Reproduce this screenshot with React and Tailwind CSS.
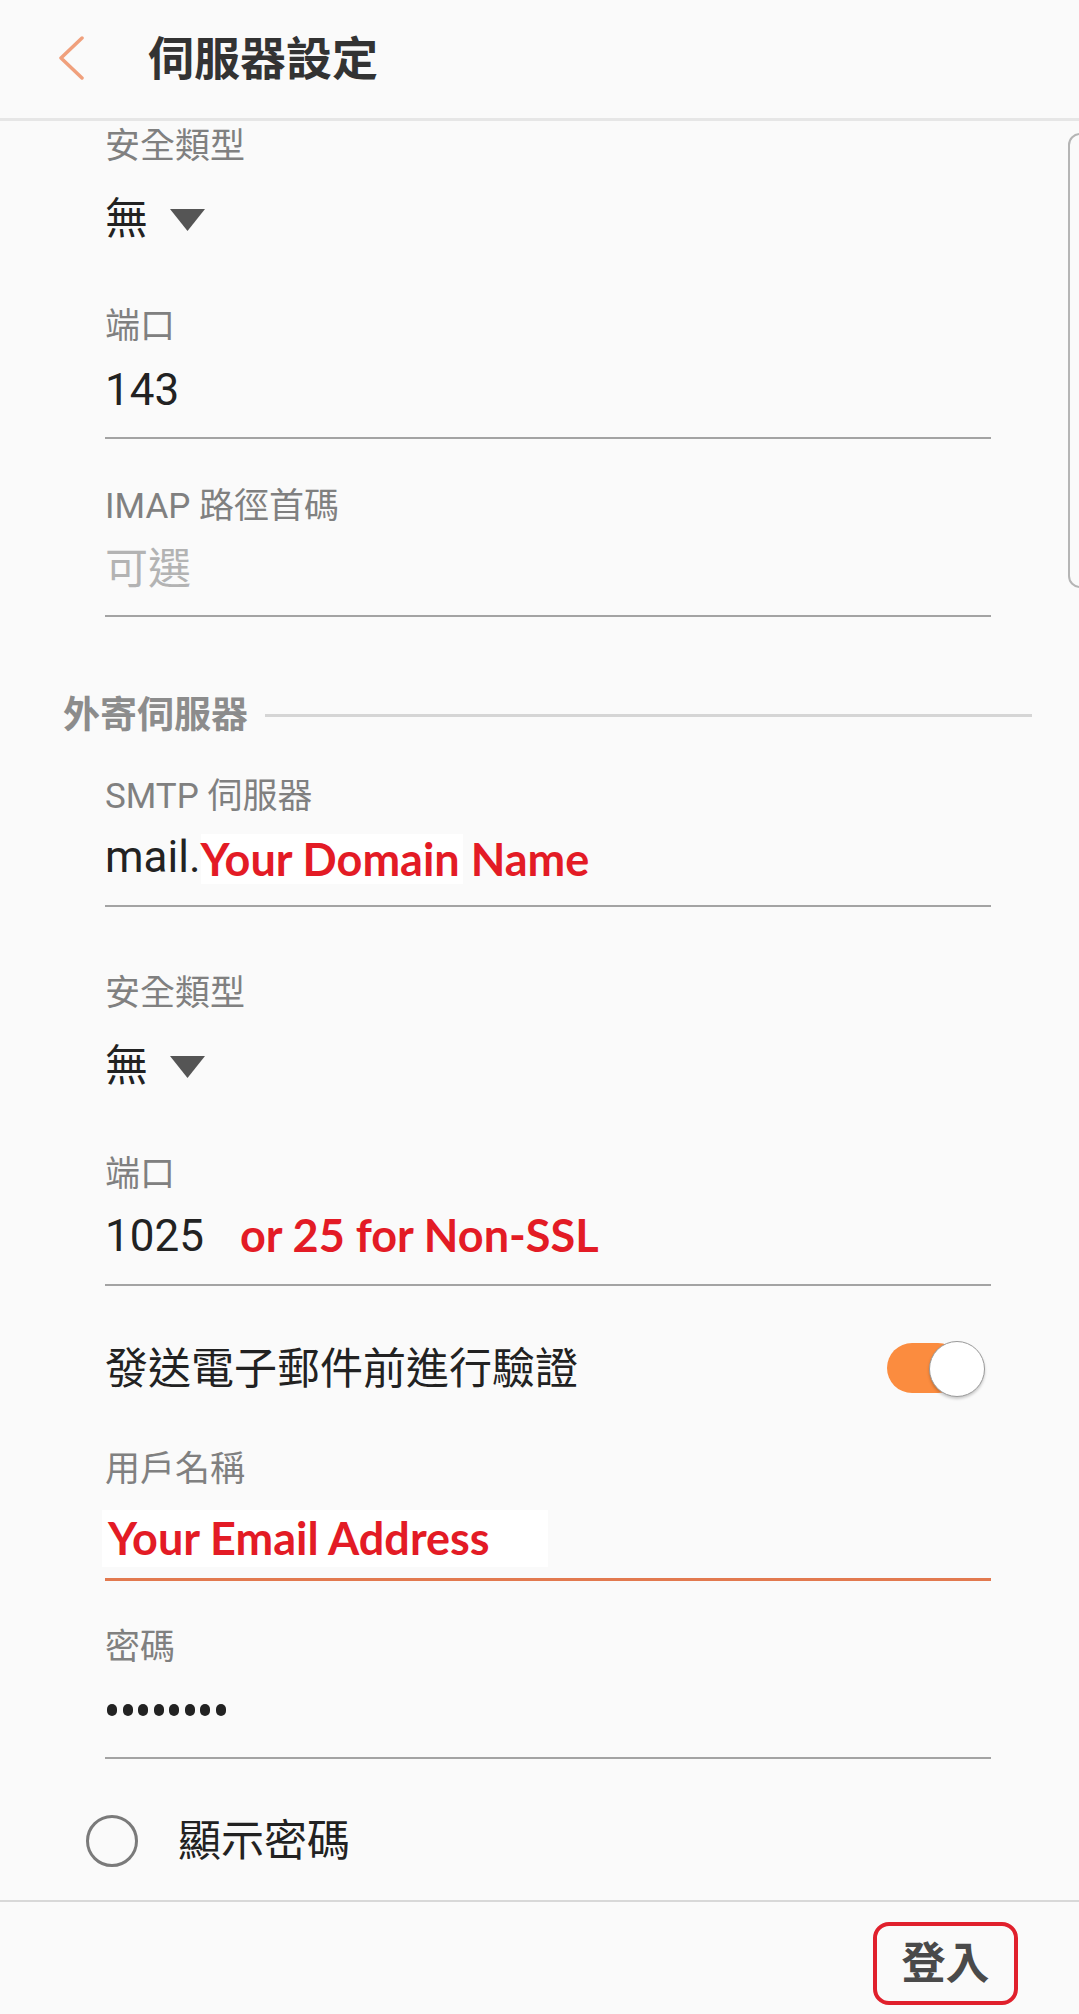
function Label({ children, className = "" }) {
  return (
    <div className={`ml-[105px] h-[40px] leading-[40px] text-[35px] text-[#808080] whitespace-nowrap ${className}`}>
      {children}
    </div>
  );
}

function Value({ children, className = "" }) {
  return (
    <div className={`ml-[105px] h-[52px] flex items-center text-[44px] text-[#222] whitespace-nowrap ${className}`}>
      {children}
    </div>
  );
}

function Line({ className = "" }) {
  return <div className={`ml-[105px] w-[886px] h-[2px] bg-[#a3a3a3] ${className}`} />;
}

function Dropdown({ className = "" }) {
  return (
    <Value className={className}>
      <span className="text-[43px]">無</span>
      <svg width="35" height="22" viewBox="0 0 35 22" className="ml-[22px] mt-[2px]">
        <polygon points="0,0 35,0 17.5,22" fill="#555" />
      </svg>
    </Value>
  );
}

const red = "font-['Lato',sans-serif] font-bold text-[45px] text-[#e31b25]";

export default function App() {
  return (
    <div className="w-[1079px] h-[2014px] overflow-hidden bg-[#fafafa] font-[Roboto,'Noto_Sans_CJK_TC',sans-serif]">
      <header className="h-[121px] flex items-center border-b-[3px] border-[#e6e6e6]">
        <svg width="30" height="44" viewBox="0 0 30 44" className="ml-[56px] mt-[-2px]">
          <polyline points="26,2 5,22 26,42" fill="none" stroke="#f0a07c" strokeWidth="3.5" strokeLinecap="round" strokeLinejoin="round" />
        </svg>
        <h1 className="ml-[62px] text-[46px] font-bold text-[#333] leading-none">伺服器設定</h1>
      </header>

      <main className="relative h-[1779px] flex flex-col">
        <Label className="mt-[6px]">安全類型</Label>
        <Dropdown className="mt-[26px]" />

        <Label className="mt-[62px]">端口</Label>
        <Value className="mt-[17px]">143</Value>
        <Line className="mt-[21px]" />

        <Label className="mt-[48px]">IMAP 路徑首碼</Label>
        <Value className="mt-[16px] text-[#b3b3b3] !text-[43px]">可選</Value>
        <Line className="mt-[20px]" />

        <div className="mt-[76px] h-[44px] pl-[63px] pr-[47px] flex items-center gap-[17px]">
          <span className="text-[37px] font-bold text-[#8c8c8c] whitespace-nowrap leading-none">外寄伺服器</span>
          <div className="flex-1 h-[3px] bg-[#d5d5d5]" />
        </div>

        <Label className="mt-[40px]">SMTP 伺服器</Label>
        <Value className="mt-[14px]">
          <span>mail.</span>
          <span className={`${red} bg-[linear-gradient(to_right,#ffffff_262px,transparent_262px)] h-[50px] leading-[50px] mt-[4px]`}>Your Domain Name</span>
        </Value>
        <Line className="mt-[22px]" />

        <Label className="mt-[67px]">安全類型</Label>
        <Dropdown className="mt-[26px]" />

        <Label className="mt-[63px]">端口</Label>
        <Value className="mt-[15px]">
          <span>1025</span>
          <span className={`${red} ml-[36px]`}>or 25 for Non-SSL</span>
        </Value>
        <Line className="mt-[22px]" />

        <div className="mt-[53px] ml-[105px] w-[880px] h-[60px] flex items-center justify-between">
          <span className="text-[43px] text-[#222] whitespace-nowrap">發送電子郵件前進行驗證</span>
          <div className="relative w-[98px] h-[56px]">
            <div className="absolute left-0 top-[2px] w-[76px] h-[50px] rounded-full bg-[#fb8c3f]" />
            <div className="absolute right-0 top-0 w-[56px] h-[56px] rounded-full bg-white border border-[#9a9a9a] shadow-[0_2px_3px_rgba(0,0,0,0.2)]" />
          </div>
        </div>

        <Label className="mt-[51px]">用戶名稱</Label>
        <div className="mt-[20px] ml-[102px] w-[446px] h-[57px] bg-white pl-[6px] flex items-center">
          <span className={red}>Your Email Address</span>
        </div>
        <div className="mt-[11px] ml-[105px] w-[886px] h-[3px] bg-[#e2794f]" />

        <Label className="mt-[47px]">密碼</Label>
        <div className="mt-[16px] ml-[107px] h-[52px] flex items-center gap-[5.5px]">
          {Array.from({ length: 8 }).map((_, i) => (
            <span key={i} className="w-[10px] h-[12px] rounded-full bg-[#222]" />
          ))}
        </div>
        <Line className="mt-[21px]" />

        <div className="mt-[54px] ml-[86px] h-[56px] flex items-center">
          <div className="w-[52px] h-[52px] rounded-full border-[3px] border-[#7a7a7a]" />
          <span className="ml-[40px] text-[43px] text-[#222] whitespace-nowrap">顯示密碼</span>
        </div>

        <div className="absolute left-[1068px] top-[12px] w-[24px] h-[455px] rounded-[12px] border-2 border-[#b5b5b5]" />
      </main>

      <footer className="h-[114px] border-t-2 border-[#d8d8d8] flex justify-end pr-[61px] pt-[20px]">
        <button className="w-[145px] h-[83px] rounded-[16px] border-4 border-[#e0202c] text-[44px] font-bold text-[#4a4a4a] leading-none">
          登入
        </button>
      </footer>
    </div>
  );
}
